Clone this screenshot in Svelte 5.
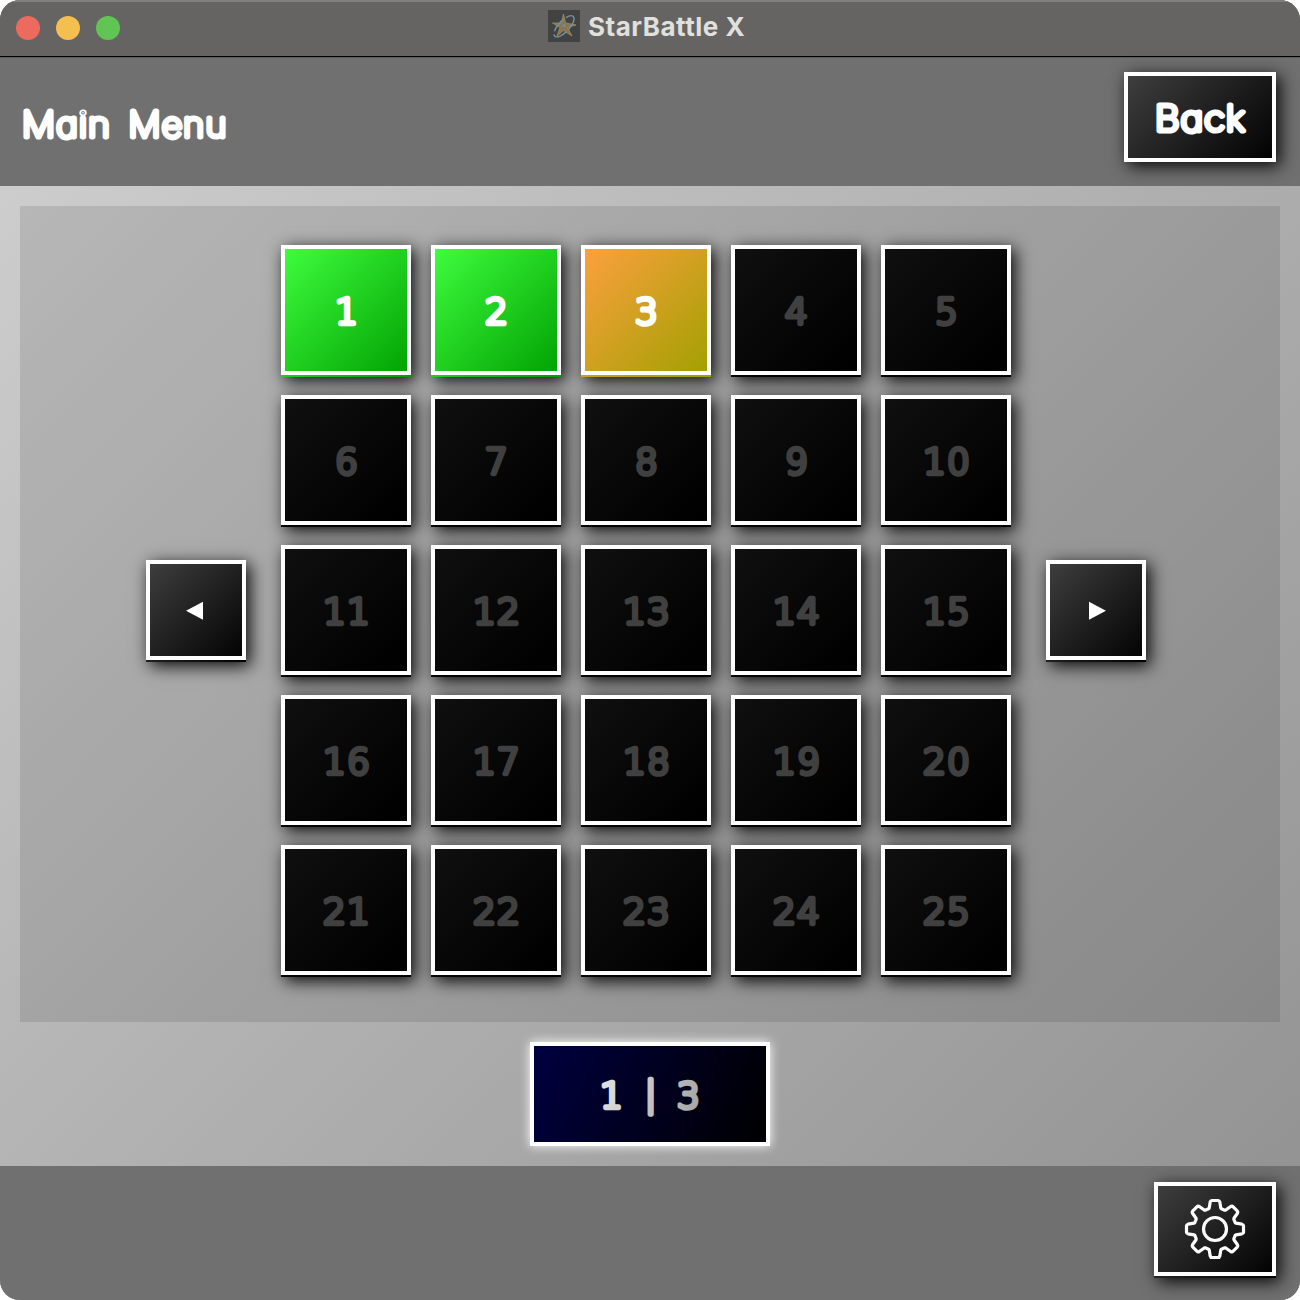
<script>
  const levels = Array.from({ length: 25 }, (_, i) => ({
    n: i + 1,
    state: i < 2 ? 'done' : i === 2 ? 'current' : 'locked'
  }));

  // Eight-toothed cog outline, centred on the origin.
  const cog = Array.from({ length: 8 }, (_, i) => {
    const a = (i * Math.PI) / 4;
    const at = (x, y) =>
      `${(x * Math.cos(a) - y * Math.sin(a)).toFixed(2)} ${(x * Math.sin(a) + y * Math.cos(a)).toFixed(2)}`;
    return `${i ? 'L' : 'M'}${at(-6.4, -20.2)}L${at(-5.8, -21)}L${at(-4.8, -27)}Q${at(-4.4, -28.5)} ${at(-3.2, -28.5)}L${at(3.2, -28.5)}Q${at(4.4, -28.5)} ${at(4.8, -27)}L${at(5.8, -21)}L${at(6.4, -20.2)}`;
  }).join('') + 'Z';
</script>

{#snippet digits(text)}
  <svg class="digits" width="100" height="60" viewBox="0 0 100 60">
    <text x="51" y="44" text-anchor="middle">{text}</text>
  </svg>
{/snippet}

<div class="window">
  <div class="titlebar">
    <div class="lights"><i class="red"></i><i class="yellow"></i><i class="green"></i></div>
    <div class="caption">
      <svg width="32" height="32" viewBox="0 0 32 32" fill="none">
        <rect width="32" height="32" fill="#424242" />
        <path d="M15.500 4L17.600 13L28 15L19.500 17.500L24 26L15.500 20.500L9 26L12 17.500L4.500 13L13.500 13Z" fill="#8a7650" stroke="#a58c5c" stroke-width="0.800" />
        <ellipse cx="16" cy="16.300" rx="13.500" ry="5.500" transform="rotate(-47 16 16.300)" stroke="#7094a2" stroke-width="1.400" stroke-dasharray="15 3" />
        <circle cx="16" cy="15.500" r="1.800" fill="#6d8d98" />
      </svg>
      <span>StarBattle X</span>
    </div>
  </div>

  <div class="app">
    <header>
      <svg class="words" width="230" height="60" viewBox="0 0 230 60">
        <text x="2" y="41.500" textLength="89" lengthAdjust="spacingAndGlyphs">Main</text>
        <text x="108.500" y="41.500" textLength="99" lengthAdjust="spacingAndGlyphs">Menu</text>
      </svg>
      <div class="key back"><div class="face">
        <svg class="words" width="100" height="60" viewBox="0 0 100 60">
          <text x="5" y="44" textLength="91" lengthAdjust="spacingAndGlyphs">Back</text>
        </svg>
      </div></div>
    </header>

    <main>
      <section class="panel">
        <div class="key arrow"><div class="face">
          <svg width="20" height="20" viewBox="0 0 20 20"><path d="M0 10.700L17 1.700V19.700Z" fill="#fff" /></svg>
        </div></div>
        <div class="grid">
          {#each levels as level}
            <div class="key level {level.state}"><div class="face">{@render digits(level.n)}</div></div>
          {/each}
        </div>
        <div class="key arrow"><div class="face">
          <svg width="20" height="20" viewBox="0 0 20 20"><path d="M3 1.700L20 10.700L3 19.700Z" fill="#fff" /></svg>
        </div></div>
      </section>
      <div class="pager">
        <svg class="pages" width="120" height="60" viewBox="0 0 120 60">
          <defs>
            <linearGradient id="fade" gradientUnits="userSpaceOnUse" x1="10" y1="10" x2="110" y2="50">
              <stop offset="0" stop-color="#e4e4e4" />
              <stop offset="1" stop-color="#a4a4a4" />
            </linearGradient>
          </defs>
          <text x="21.500" y="44" text-anchor="middle">1</text>
          <text class="bar" x="60.500" y="42" text-anchor="middle">|</text>
          <text x="98.500" y="44" text-anchor="middle">3</text>
        </svg>
      </div>
    </main>

    <footer>
      <div class="key settings"><div class="face">
        <svg width="64" height="64" viewBox="-32 -32 64 64" fill="none" stroke="#fff" stroke-width="3.200" stroke-linejoin="round">
          <path d={cog} />
          <circle r="11.500" />
        </svg>
      </div></div>
    </footer>
  </div>
</div>

<style>
  :global(body) { margin: 0; background: #fff; }
  * { box-sizing: border-box; }
  svg { display: block; overflow: visible; flex: none; }
  .window {
    width: 1300px; height: 1300px; border-radius: 20px; overflow: hidden;
    display: flex; flex-direction: column; background: #656462;
  }
  .titlebar {
    height: 57px; flex: none; display: grid; grid-template-columns: 548px 1fr; align-items: center;
    background: #656462; border-top: 2px solid #80807e; border-bottom: 1px solid #000;
  }
  .lights { display: flex; gap: 16px; padding: 0 0 2px 16px; }
  .lights i { width: 24px; height: 24px; border-radius: 50%; }
  .red { background: #ed6a5e; }
  .yellow { background: #f4bf4f; }
  .green { background: #61c554; }
  .caption {
    display: flex; align-items: center; gap: 8px; padding-bottom: 6px; color: #e0e0de;
    font: 700 26px/32px Inter, sans-serif; letter-spacing: 0.5px; white-space: nowrap;
  }
  .caption span { padding-top: 2px; line-height: 30px; }
  .app {
    flex: 1; display: flex; flex-direction: column;
    background: linear-gradient(135deg, #d0d0d0, #909090);
  }
  header, footer { display: flex; background: #707070; }
  header {
    height: 129px; justify-content: space-between; padding: 15px 24px 0 20px;
    border-top: 1px solid #5c5c5c;
  }
  header > .words { margin-top: 22px; }
  footer { height: 134px; justify-content: flex-end; padding: 16px 24px 0 0; }
  main { height: 980px; padding: 20px; display: flex; flex-direction: column; align-items: center; gap: 20px; }
  .panel {
    width: 1260px; height: 816px; padding: 39px 0 0 126px; background: rgba(0, 0, 0, 0.1);
    display: flex; gap: 35px; align-items: flex-start;
  }
  .grid { display: grid; grid-template-columns: repeat(5, 130px); gap: 18px 20px; }

  .key {
    display: flex; flex: none; padding-bottom: 2px;
    background: linear-gradient(135deg, #404040, #000);
    box-shadow: 4px 4px 16px rgba(0, 0, 0, 0.95);
  }
  .face { flex: 1; display: flex; align-items: center; justify-content: center; border: 4px solid #fff; }
  .level { width: 130px; height: 132px; }
  .done { background: linear-gradient(135deg, #40ff40, #00a000); }
  .current { background: linear-gradient(135deg, #ffa040, #a0a000); }
  .locked { background: linear-gradient(135deg, #101010, #000 90%); }
  .arrow { width: 100px; height: 102px; margin-top: 315px; }
  .back { width: 152px; height: 90px; padding: 0; margin-top: -1px; }
  .settings { width: 122px; height: 96px; }

  .pager {
    width: 240px; height: 104px; border: 4px solid #fff; display: flex; align-items: center; justify-content: center;
    background: linear-gradient(115deg, #000040, #000); box-shadow: 0 0 10px #fff;
  }

  text { stroke-linejoin: round; stroke-linecap: round; }
  .digits text, .pages text {
    font: 200 36px "DejaVu Sans", sans-serif; fill: #fff; stroke: #fff; stroke-width: 4.500px; letter-spacing: 1.200px;
  }
  .locked .digits text { fill: #404040; stroke: #404040; }
  .pages text { fill: url(#fade); stroke: url(#fade); letter-spacing: 0; }
  .words text {
    font: 100 35px Inter, sans-serif; font-feature-settings: "cv11" 1; letter-spacing: 1.200px;
    fill: #fff; stroke: #fff; stroke-width: 5.200px;
  }
</style>
